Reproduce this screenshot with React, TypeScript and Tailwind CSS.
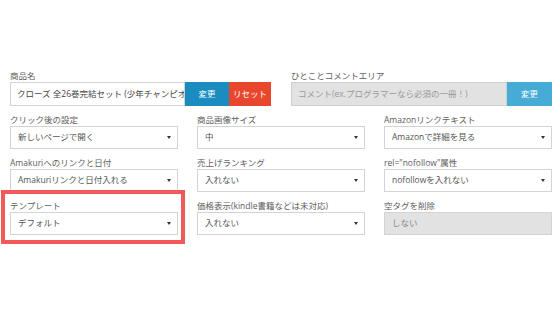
const font = { fontFamily: '"Open Sans", "Noto Sans CJK JP", sans-serif' }

function Caret() {
  return <span className="w-0 h-0 border-x-[2.5px] border-x-transparent border-t-[3px] border-t-[#333]" />
}

function Field({ label, value, disabled }: { label: string; value: string; disabled?: boolean }) {
  return (
    <div className="flex flex-col">
      <div className="h-[13px] leading-[13px] text-[8.5px] text-[#5e5e5e]">{label}</div>
      <div
        className={`h-[23px] flex items-center justify-between pl-[7px] pr-[6px] border border-[#d4d4d4] text-[8.5px] ${
          disabled ? 'bg-[#e2e2e2] text-[#888]' : 'bg-white text-[#555]'
        }`}
      >
        <span>{value}</span>
        {!disabled && <Caret />}
      </div>
    </div>
  )
}

const fields = [
  { label: 'クリック後の設定', value: '新しいページで開く' },
  { label: '商品画像サイズ', value: '中' },
  { label: 'Amazonリンクテキスト', value: 'Amazonで詳細を見る' },
  { label: 'Amakuriへのリンクと日付', value: 'Amakuriリンクと日付入れる' },
  { label: '売上げランキング', value: '入れない' },
  { label: 'rel="nofollow"属性', value: 'nofollowを入れない' },
  { label: 'テンプレート', value: 'デフォルト' },
  { label: '価格表示(kindle書籍などは未対応)', value: '入れない' },
  { label: '空タグを削除', value: 'しない', disabled: true },
]

export default function App() {
  return (
    <div className="w-[560px] h-[315px] bg-white relative overflow-hidden" style={font}>
      <div className="pt-[69px] pl-[10px] w-[552px] flex flex-col gap-[7px]">
        <div className="grid grid-cols-2 gap-x-[20px]">
          <div className="flex flex-col">
            <div className="h-[13px] leading-[13px] text-[8.5px] text-[#5e5e5e]">商品名</div>
            <div className="flex h-[24px]">
              <div className="flex-1 min-w-0 border border-[#d4d4d4] flex items-center pl-[6px] text-[8.5px] text-[#444] overflow-hidden whitespace-nowrap">
                クローズ 全26巻完結セット (少年チャンピオ
              </div>
              <div className="w-[44px] bg-[#1a8cbf] text-white text-[8.5px] flex items-center justify-center">変更</div>
              <div className="w-[42px] bg-[#e9472d] text-white text-[8.5px] flex items-center justify-center">リセット</div>
            </div>
          </div>
          <div className="flex flex-col">
            <div className="h-[13px] leading-[13px] text-[8.5px] text-[#5e5e5e]">ひとことコメントエリア</div>
            <div className="flex h-[24px]">
              <div className="flex-1 min-w-0 border border-[#cfcfcf] bg-[#e2e2e2] flex items-center pl-[6px] text-[8.5px] text-[#999] whitespace-nowrap overflow-hidden">
                コメント(ex.プログラマーなら必須の一冊！)
              </div>
              <div className="w-[45px] bg-[#47acd5] text-white text-[8.5px] flex items-center justify-center">変更</div>
            </div>
          </div>
        </div>
        <div className="grid grid-cols-3 gap-x-[19px] gap-y-[7px]">
          {fields.map(f => (
            <Field key={f.label} label={f.label} value={f.value} disabled={f.disabled} />
          ))}
        </div>
      </div>
      <div className="absolute left-[1px] top-[190px] w-[184px] h-[54px] border-[4px] border-[#f25a5a] pointer-events-none" />
    </div>
  )
}
